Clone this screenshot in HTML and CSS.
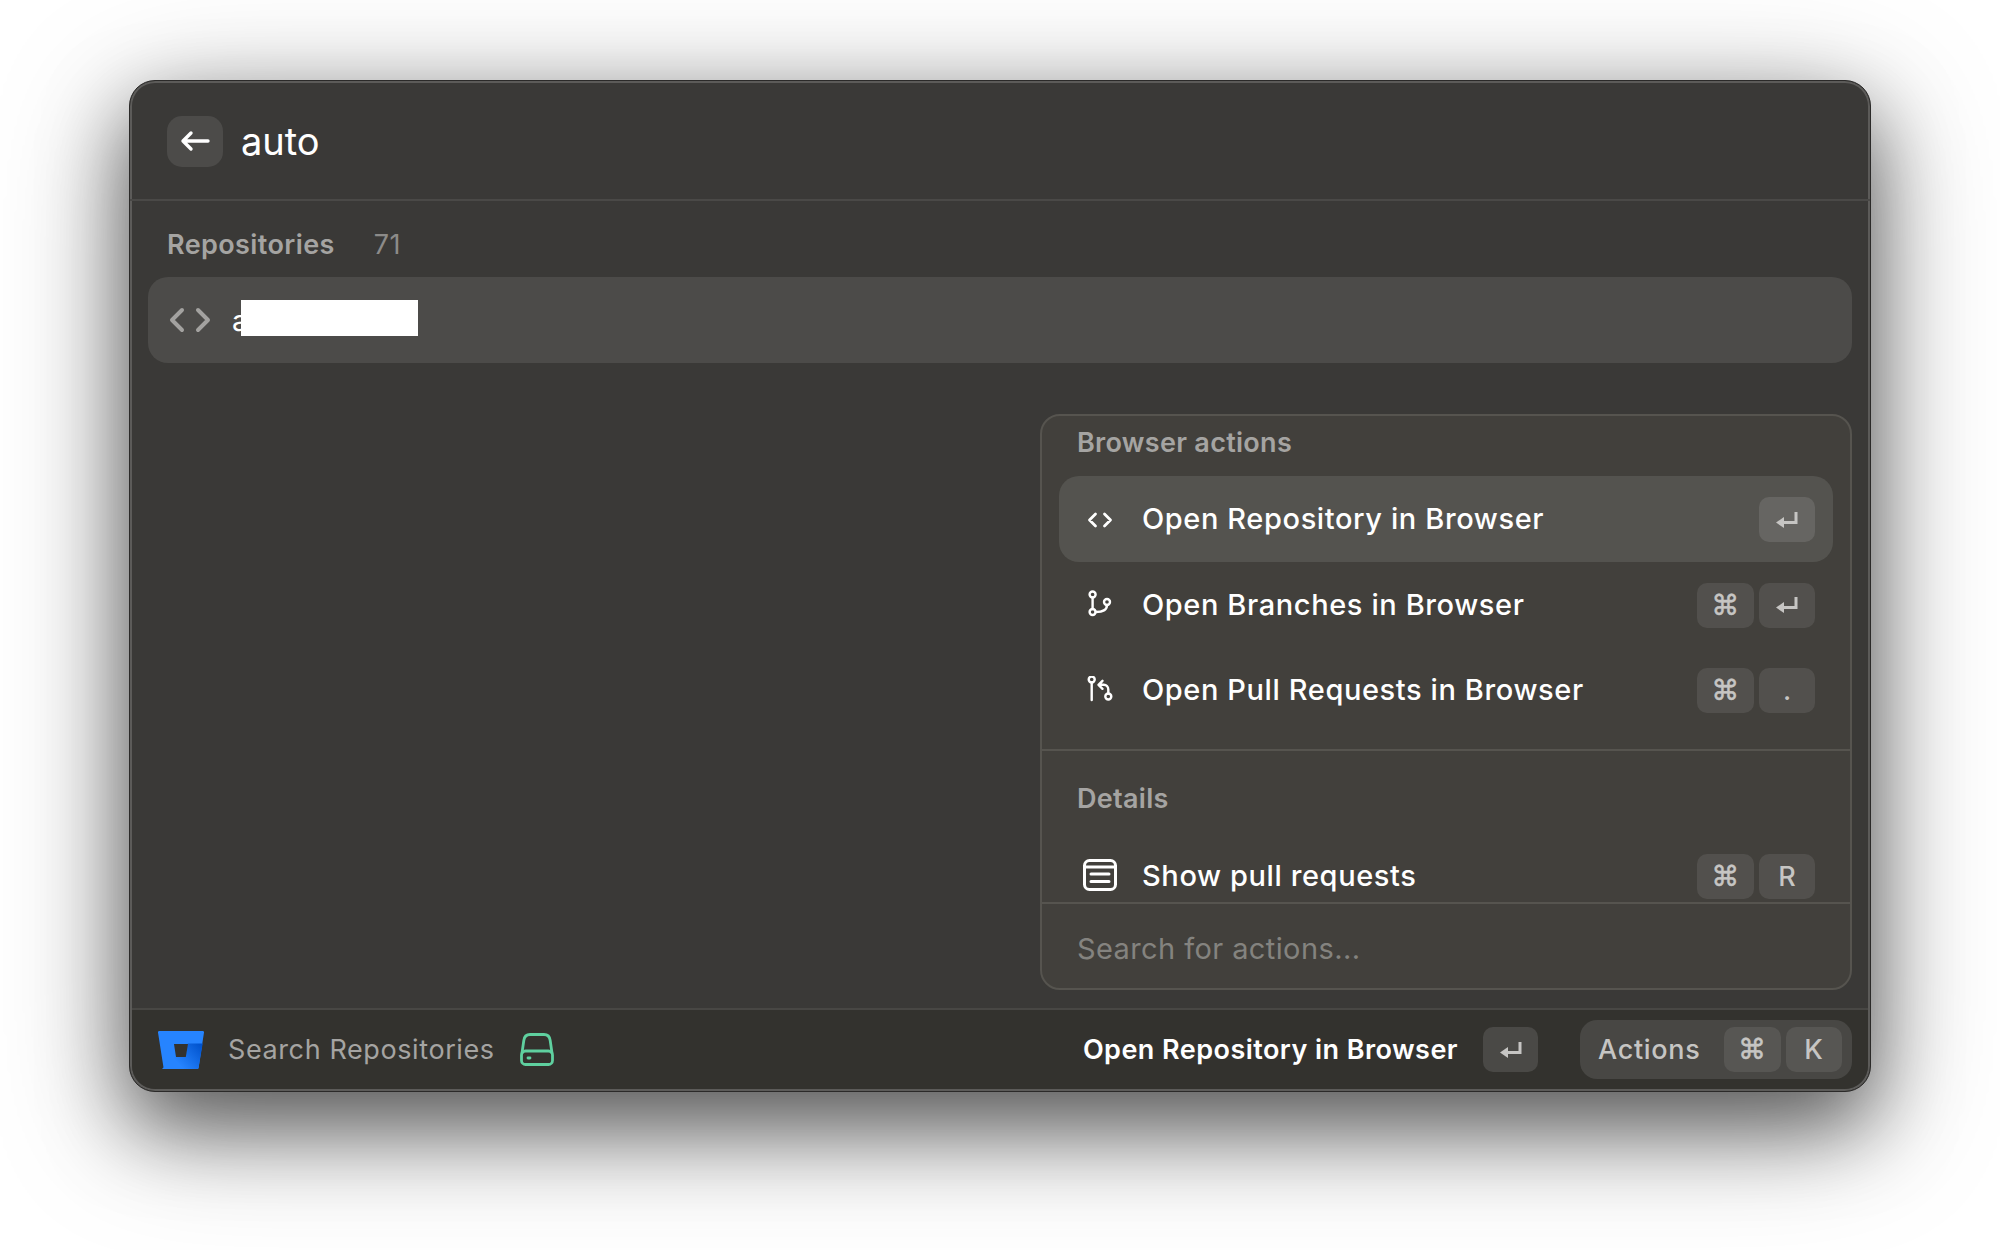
FILE: index.html
```html
<!DOCTYPE html>
<html lang="en">

<head>
    <meta charset="UTF-8" />
    <title>Search Repositories</title>
    <link rel="stylesheet" href="styles.css">
</head>

<body>
    <div class="window">
        <header class="top-bar">
            <button class="back-btn">
                <svg width="30" height="24" viewBox="0 0 30 24" fill="none" stroke="#fff" stroke-width="3.4" stroke-linecap="round" stroke-linejoin="round">
                    <path d="M28 12H3M11 4 3 12l8 8" />
                </svg>
            </button>
            <span class="query">auto</span>
        </header>

        <main class="results">
            <div class="section-title">
                <span>Repositories</span>
                <span class="count">71</span>
            </div>
            <div class="repo-row">
                <svg class="repo-icon" width="42" height="28" viewBox="0 0 42 28" fill="none" stroke="#a3a2a0" stroke-width="4" stroke-linecap="round" stroke-linejoin="round">
                    <path d="M13 4 3 14l10 10M29 4l10 10-10 10" />
                </svg>
                <span class="repo-name">a</span>
                <div class="redacted"></div>
            </div>

            <section class="actions-panel">
                <div class="actions-list">
                    <div class="panel-title">Browser actions</div>
                    <div class="action selected">
                        <svg class="action-icon" width="34" height="28" viewBox="0 0 34 28" fill="none" stroke="#fff" stroke-width="2.8" stroke-linecap="round" stroke-linejoin="round">
                            <path d="M12.500 9 6.500 15l6 6M21.500 9l6 6-6 6" />
                        </svg>
                        <span class="action-label">Open Repository in Browser</span>
                        <div class="keys">
                            <kbd class="key">
                                <svg width="24" height="18" viewBox="0 0 24 18"><path d="M21 1v10.500H8" fill="none" stroke="#c6c5c3" stroke-width="3" /><path d="M1 11.500 9 6v11Z" fill="#c6c5c3" /></svg>
                            </kbd>
                        </div>
                    </div>
                    <div class="action">
                        <svg class="action-icon" width="34" height="28" viewBox="0 0 34 28" fill="none" stroke="#fff" stroke-width="2.4" stroke-linecap="round">
                            <circle cx="9.600" cy="4.500" r="3" /><circle cx="9.600" cy="22" r="3" /><circle cx="24" cy="12" r="3" />
                            <path d="M9.600 7.500V19M24 15c0 4.500-3 7-11.400 7" />
                        </svg>
                        <span class="action-label">Open Branches in Browser</span>
                        <div class="keys">
                            <kbd class="key cmd">⌘</kbd>
                            <kbd class="key">
                                <svg width="24" height="18" viewBox="0 0 24 18"><path d="M21 1v10.500H8" fill="none" stroke="#c6c5c3" stroke-width="3" /><path d="M1 11.500 9 6v11Z" fill="#c6c5c3" /></svg>
                            </kbd>
                        </div>
                    </div>
                    <div class="action">
                        <svg class="action-icon" width="34" height="28" viewBox="0 0 34 28" fill="none" stroke="#fff" stroke-width="2.4" stroke-linecap="round" stroke-linejoin="round">
                            <circle cx="8.700" cy="3.500" r="3" /><circle cx="25.300" cy="20.500" r="3" />
                            <path d="M8.700 6.500V24M25.300 17.500v-4c0-3-2-4.700-4.500-4.700h-4.800M19.500 4.800l-4 4 4 4" />
                        </svg>
                        <span class="action-label">Open Pull Requests in Browser</span>
                        <div class="keys">
                            <kbd class="key cmd">⌘</kbd>
                            <kbd class="key">.</kbd>
                        </div>
                    </div>
                    <div class="panel-divider"></div>
                    <div class="panel-title details-title">Details</div>
                    <div class="action">
                        <svg class="action-icon" width="34" height="32" viewBox="0 0 34 32" fill="none" stroke="#fff" stroke-width="3" stroke-linecap="round">
                            <rect x="1.500" y="1.500" width="31" height="29" rx="5" />
                            <path d="M2 8h30M8 15h18M8 22.500h18" />
                        </svg>
                        <span class="action-label">Show pull requests</span>
                        <div class="keys">
                            <kbd class="key cmd">⌘</kbd>
                            <kbd class="key">R</kbd>
                        </div>
                    </div>
                </div>
                <div class="actions-search">Search for actions...</div>
            </section>
        </main>

        <footer class="status-bar">
            <svg class="logo" width="46" height="38" viewBox="0 0 46 38">
                <defs>
                    <linearGradient id="bucket" x1="40" y1="10" x2="18" y2="30" gradientUnits="userSpaceOnUse">
                        <stop offset="0" stop-color="#0052cc" />
                        <stop offset="1" stop-color="#2684ff" />
                    </linearGradient>
                </defs>
                <path d="M1.400 0h43.200c.9 0 1.500.7 1.400 1.600L40.600 36.400c-.1.9-.8 1.600-1.700 1.600H7.200c-.9 0-1.600-.7-1.700-1.600L0 1.600C-.1.700.5 0 1.400 0Z" fill="#2684ff" />
                <path d="M44.700 12.500H29.800L27.500 26H16.600L4 38h35c.9 0 1.500-.7 1.600-1.600Z" fill="url(#bucket)" />
                <path d="M16 13h14l-2.200 13H18Z" fill="#33322e" />
            </svg>
            <span class="command-name">Search Repositories</span>
            <svg class="drive" width="34" height="33" viewBox="0 0 34 33" fill="none" stroke="#5fd09f" stroke-width="2.8" stroke-linecap="round" stroke-linejoin="round">
                <path d="M2 20 3.800 7.500C4.300 3.500 6.500 1.500 10 1.500h14c3.500 0 5.700 2 6.200 6L32 20" />
                <rect x="1.500" y="18" width="31" height="13.500" rx="4" />
                <path d="M8 25h2" />
            </svg>
            <span class="primary-action">Open Repository in Browser</span>
            <kbd class="key footer-key">
                <svg width="24" height="18" viewBox="0 0 24 18"><path d="M21 1v10.500H8" fill="none" stroke="#c6c5c3" stroke-width="3" /><path d="M1 11.500 9 6v11Z" fill="#c6c5c3" /></svg>
            </kbd>
            <div class="actions-btn">
                <span>Actions</span>
                <div class="keys">
                    <kbd class="key cmd">⌘</kbd>
                    <kbd class="key">K</kbd>
                </div>
            </div>
        </footer>
    </div>
</body>

</html>
```

FILE: styles.css
```css
* {
    box-sizing: border-box;
}

body {
    margin: 0;
    height: 1250px;
    padding: 80px 129px 0;
    background: #fff;
    font-family: Inter, "Liberation Sans", sans-serif;
    color: #fff;
    overflow: hidden;
}

.window {
    width: 1742px;
    height: 1012px;
    display: flex;
    flex-direction: column;
    background: #3a3937;
    border: 1px solid #2b2a29;
    border-radius: 26px;
    box-shadow:
        inset 0 0 0 2px #5c5b59,
        0 34px 80px rgba(0, 0, 0, 0.5),
        0 30px 130px rgba(0, 0, 0, 0.35);
}

.top-bar {
    height: 120px;
    flex-shrink: 0;
    display: flex;
    align-items: center;
    gap: 18px;
    padding: 2px 37px 0;
    border-bottom: 2px solid #4a4947;
}

.back-btn {
    width: 56px;
    height: 51px;
    padding: 0;
    display: flex;
    justify-content: center;
    align-items: center;
    background: #4c4b49;
    border: none;
    border-radius: 15px;
}

.query {
    font-size: 38px;
    color: #fff;
}

.results {
    flex: 1;
    position: relative;
    padding: 0 18px;
}

.section-title {
    display: flex;
    align-items: center;
    gap: 39px;
    height: 76px;
    padding: 11px 19px 0;
    font-size: 27px;
    font-weight: 600;
    letter-spacing: 0.4px;
    color: #a5a4a2;
}

.count {
    font-weight: 400;
    color: #8c8b89;
}

.repo-row {
    height: 86px;
    display: flex;
    align-items: center;
    padding-left: 21px;
    background: #4c4b49;
    border-radius: 20px;
}

.repo-icon {
    flex-shrink: 0;
}

.repo-name {
    margin-left: 21px;
    font-size: 29px;
}

.redacted {
    width: 177px;
    height: 36px;
    margin: -4px 0 0 -7px;
    background: #fff;
}

.actions-panel {
    position: absolute;
    right: 18px;
    bottom: 18px;
    width: 812px;
    height: 576px;
    display: flex;
    flex-direction: column;
    background: #42403c;
    border: 2px solid #56544f;
    border-radius: 20px;
}

.actions-list {
    flex: 1;
    min-height: 0;
    overflow: hidden;
    padding: 0 17px;
    border-bottom: 2px solid #56544f;
}

.panel-title {
    height: 60px;
    display: flex;
    align-items: center;
    padding: 0 18px 7px;
    font-size: 27px;
    font-weight: 600;
    letter-spacing: 0.3px;
    color: #a5a4a2;
}

.action {
    height: 85.500px;
    display: flex;
    align-items: center;
    padding: 0 18px 0 24px;
    border-radius: 20px;
}

.action.selected {
    background: #54534f;
}

.action-icon {
    flex-shrink: 0;
}

.action-label {
    flex: 1;
    margin-left: 25px;
    font-size: 29px;
    font-weight: 500;
    letter-spacing: 0.6px;
    color: #fff;
}

.keys {
    display: flex;
    gap: 5px;
    margin-top: 2px;
}

.key {
    width: 56px;
    height: 45px;
    display: flex;
    justify-content: center;
    align-items: center;
    background: #52504d;
    border-radius: 10px;
    font-family: Inter, sans-serif;
    font-size: 27px;
    font-weight: 500;
    color: #c6c5c3;
}

.key.cmd {
    width: 57px;
    font-family: "DejaVu Sans", sans-serif;
    font-size: 28px;
    -webkit-text-stroke: 0.5px #c6c5c3;
}

.selected .key {
    background: #666562;
}

.panel-divider {
    height: 2px;
    margin: 16px -17px 0;
    background: #56544f;
}

.details-title {
    height: 66px;
    margin-top: 16px;
    padding-bottom: 3px;
}

.actions-search {
    height: 84px;
    flex-shrink: 0;
    display: flex;
    align-items: center;
    padding: 4px 35px 0;
    font-size: 29px;
    letter-spacing: 0.4px;
    color: #84837f;
}

.status-bar {
    height: 81px;
    flex-shrink: 0;
    display: flex;
    align-items: center;
    margin: 0 2px 2px;
    padding: 0 16px 0 26px;
    background: #33322e;
    border-top: 2px solid #484744;
    border-radius: 0 0 24px 24px;
}

.logo {
    flex-shrink: 0;
}

.command-name {
    margin-left: 24px;
    font-size: 27px;
    letter-spacing: 0.6px;
    color: #a5a4a2;
}

.drive {
    margin-left: 25px;
}

.primary-action {
    margin-left: auto;
    font-size: 27px;
    font-weight: 600;
    letter-spacing: 0.45px;
    color: #fff;
}

.footer-key {
    margin-left: 25px;
    width: 55px;
    background: #4a4946;
}

.actions-btn {
    width: 272px;
    height: 59px;
    margin-left: 42px;
    display: flex;
    align-items: center;
    justify-content: space-between;
    padding: 0 10px 0 18px;
    background: #484744;
    border-radius: 17px;
    font-size: 27px;
    font-weight: 500;
    letter-spacing: 0.7px;
    color: #c6c5c3;
}

.actions-btn .keys {
    margin-top: 0;
}

.actions-btn .key {
    background: #575653;
}
```
